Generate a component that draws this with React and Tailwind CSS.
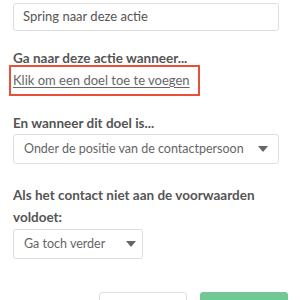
const Caret = () => (
  <svg width="10" height="6" viewBox="0 0 10 6" className="shrink-0">
    <path d="M0 0 L10 0 L5 6 Z" fill="#666" />
  </svg>
);

const App = () => {
  return (
    <div
      className="w-[300px] h-[300px] overflow-hidden bg-white text-[#555]"
      style={{ fontFamily: 'Lato, "Open Sans", sans-serif' }}
    >
      <div className="pt-[3px] pl-[13px] pr-[21px]">
        <div className="h-[28px] border border-[#dedede] rounded-[3px] flex items-center pl-[9px] text-[13px] text-[#555]">
          Spring naar deze actie
        </div>

        <div className="mt-[18px] text-[13.5px] font-bold leading-[18px] text-[#555]">
          Ga naar deze actie wanneer...
        </div>
        <div className="-ml-[4px] -mt-[2px] w-[191px] h-[31px] border-2 border-[#e8503a] flex items-center pl-[2px]">
          <span className="text-[13px] underline text-[#666] underline-offset-2">
            Klik om een doel toe te voegen
          </span>
        </div>

        <div className="mt-[18px] text-[13.5px] font-bold leading-[18px] text-[#555]">
          En wanneer dit doel is...
        </div>
        <div className="mt-[2px] h-[30px] w-[266px] border border-[#dedede] rounded-[3px] flex items-center justify-between pl-[10px] pr-[10px] text-[12.5px] text-[#666]">
          <span>Onder de positie van de contactpersoon</span>
          <Caret />
        </div>

        <div className="mt-[20px] text-[13.5px] font-bold leading-[22px] text-[#555]">
          Als het contact niet aan de voorwaarden voldoet:
        </div>
        <div className="mt-[1px] h-[30px] w-[130px] border border-[#dedede] rounded-[3px] flex items-center justify-between pl-[10px] pr-[6px] text-[12.5px] text-[#666]">
          <span>Ga toch verder</span>
          <Caret />
        </div>

        <div className="mt-[33px] flex justify-end gap-[13px]">
          <button className="w-[88px] h-[30px] border border-[#dedede] rounded-[3px] bg-white" />
          <button className="w-[88px] h-[30px] rounded-[3px] bg-[#72c795] -mr-[9px]" />
        </div>
      </div>
    </div>
  );
};

export default App;
